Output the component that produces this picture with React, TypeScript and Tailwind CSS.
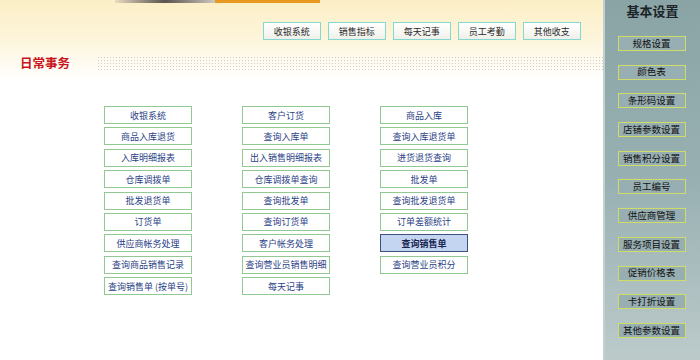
import React from "react";

const font = { fontFamily: '"Noto Sans CJK SC", "Noto Sans", sans-serif' };

const tabs = ["收银系统", "销售指标", "每天记事", "员工考勤", "其他收支"];

const col1 = ["收银系统", "商品入库退货", "入库明细报表", "仓库调拨单", "批发退货单", "订货单", "供应商帐务处理", "查询商品销售记录", "查询销售单 (按单号)"];
const col2 = ["客户订货", "查询入库单", "出入销售明细报表", "仓库调拨单查询", "查询批发单", "查询订货单", "客户帐务处理", "查询营业员销售明细", "每天记事"];
const col3 = ["商品入库", "查询入库退货单", "进货退货查询", "批发单", "查询批发退货单", "订单差额统计", "查询销售单", "查询营业员积分"];

const side = ["规格设置", "颜色表", "条形码设置", "店铺参数设置", "销售积分设置", "员工编号", "供应商管理", "服务项目设置", "促销价格表", "卡打折设置", "其他参数设置"];

function Btn({ label, active }: { label: string; active?: boolean }) {
  return (
    <div
      className={
        "h-[18px] w-[88px] flex items-center justify-center text-[9px] leading-none whitespace-nowrap " +
        (active
          ? "bg-[#c3d5f0] border border-[#3f4f80] text-[#1a2450] font-bold"
          : "bg-white border border-[#92c892] text-[#2b3f86]")
      }
    >
      {label}
    </div>
  );
}

function Column({ items }: { items: string[] }) {
  return (
    <div className="flex flex-col gap-[3.4px] w-[88px]">
      {items.map((t) => (
        <Btn key={t} label={t} active={t === "查询销售单"} />
      ))}
    </div>
  );
}

export default function App() {
  return (
    <div className="w-[700px] h-[360px] flex overflow-hidden bg-white" style={font}>
      <div className="w-[603px] h-full flex flex-col bg-white">
        <div className="h-[80px] flex flex-col bg-gradient-to-b from-[#fcefc6] via-[#fdf5dc] to-white">
          <div className="h-[3px] flex">
            <div className="ml-[115px] w-[100px] h-full bg-gradient-to-r from-[#e8dcc0] via-[#5a5450] to-[#cfc8c0]" />
            <div className="w-[105px] h-full bg-[#e89a20]" />
          </div>
          <div className="mt-[19px] flex justify-end pr-[22px] gap-[6.5px]">
            {tabs.map((t) => (
              <div
                key={t}
                className="w-[58.5px] h-[18px] border border-[#84d8d0] bg-gradient-to-b from-white to-[#f0f0ea] flex items-center justify-center text-[9px] text-[#2a2a2a] leading-none"
              >
                {t}
              </div>
            ))}
          </div>
        </div>
        <div className="-mt-[24px] h-[15px] flex items-center">
          <div className="w-[97px] pl-[20px] text-[12.5px] font-bold text-[#c8141c] leading-none">日常事务</div>
          <div className="flex-1 h-[15px] bg-[radial-gradient(#cccccc_0.8px,transparent_0.9px)] bg-[length:3px_3px]" />
        </div>
        <div className="mt-[35px] pl-[104px] flex gap-[50px]">
          <Column items={col1} />
          <Column items={col2} />
          <Column items={col3} />
        </div>
      </div>
      <div className="w-[97px] h-full flex flex-col items-center bg-gradient-to-b from-[#8aa4a6] via-[#98b0b2] to-[#bccaca] border-l-[2px] border-[#c4cfd0]">
        <div className="mt-[3px] text-[13px] font-bold text-[#1c2428] leading-[16px]">基本设置</div>
        <div className="mt-[17px] flex flex-col gap-[13.7px] -ml-[2px]">
          {side.map((t) => (
            <div
              key={t}
              className="w-[68px] h-[15px] border border-[#cfdc66] bg-[#97aeb2] flex items-center justify-center text-[9.5px] text-[#111] leading-none whitespace-nowrap"
            >
              {t}
            </div>
          ))}
        </div>
      </div>
    </div>
  );
}
